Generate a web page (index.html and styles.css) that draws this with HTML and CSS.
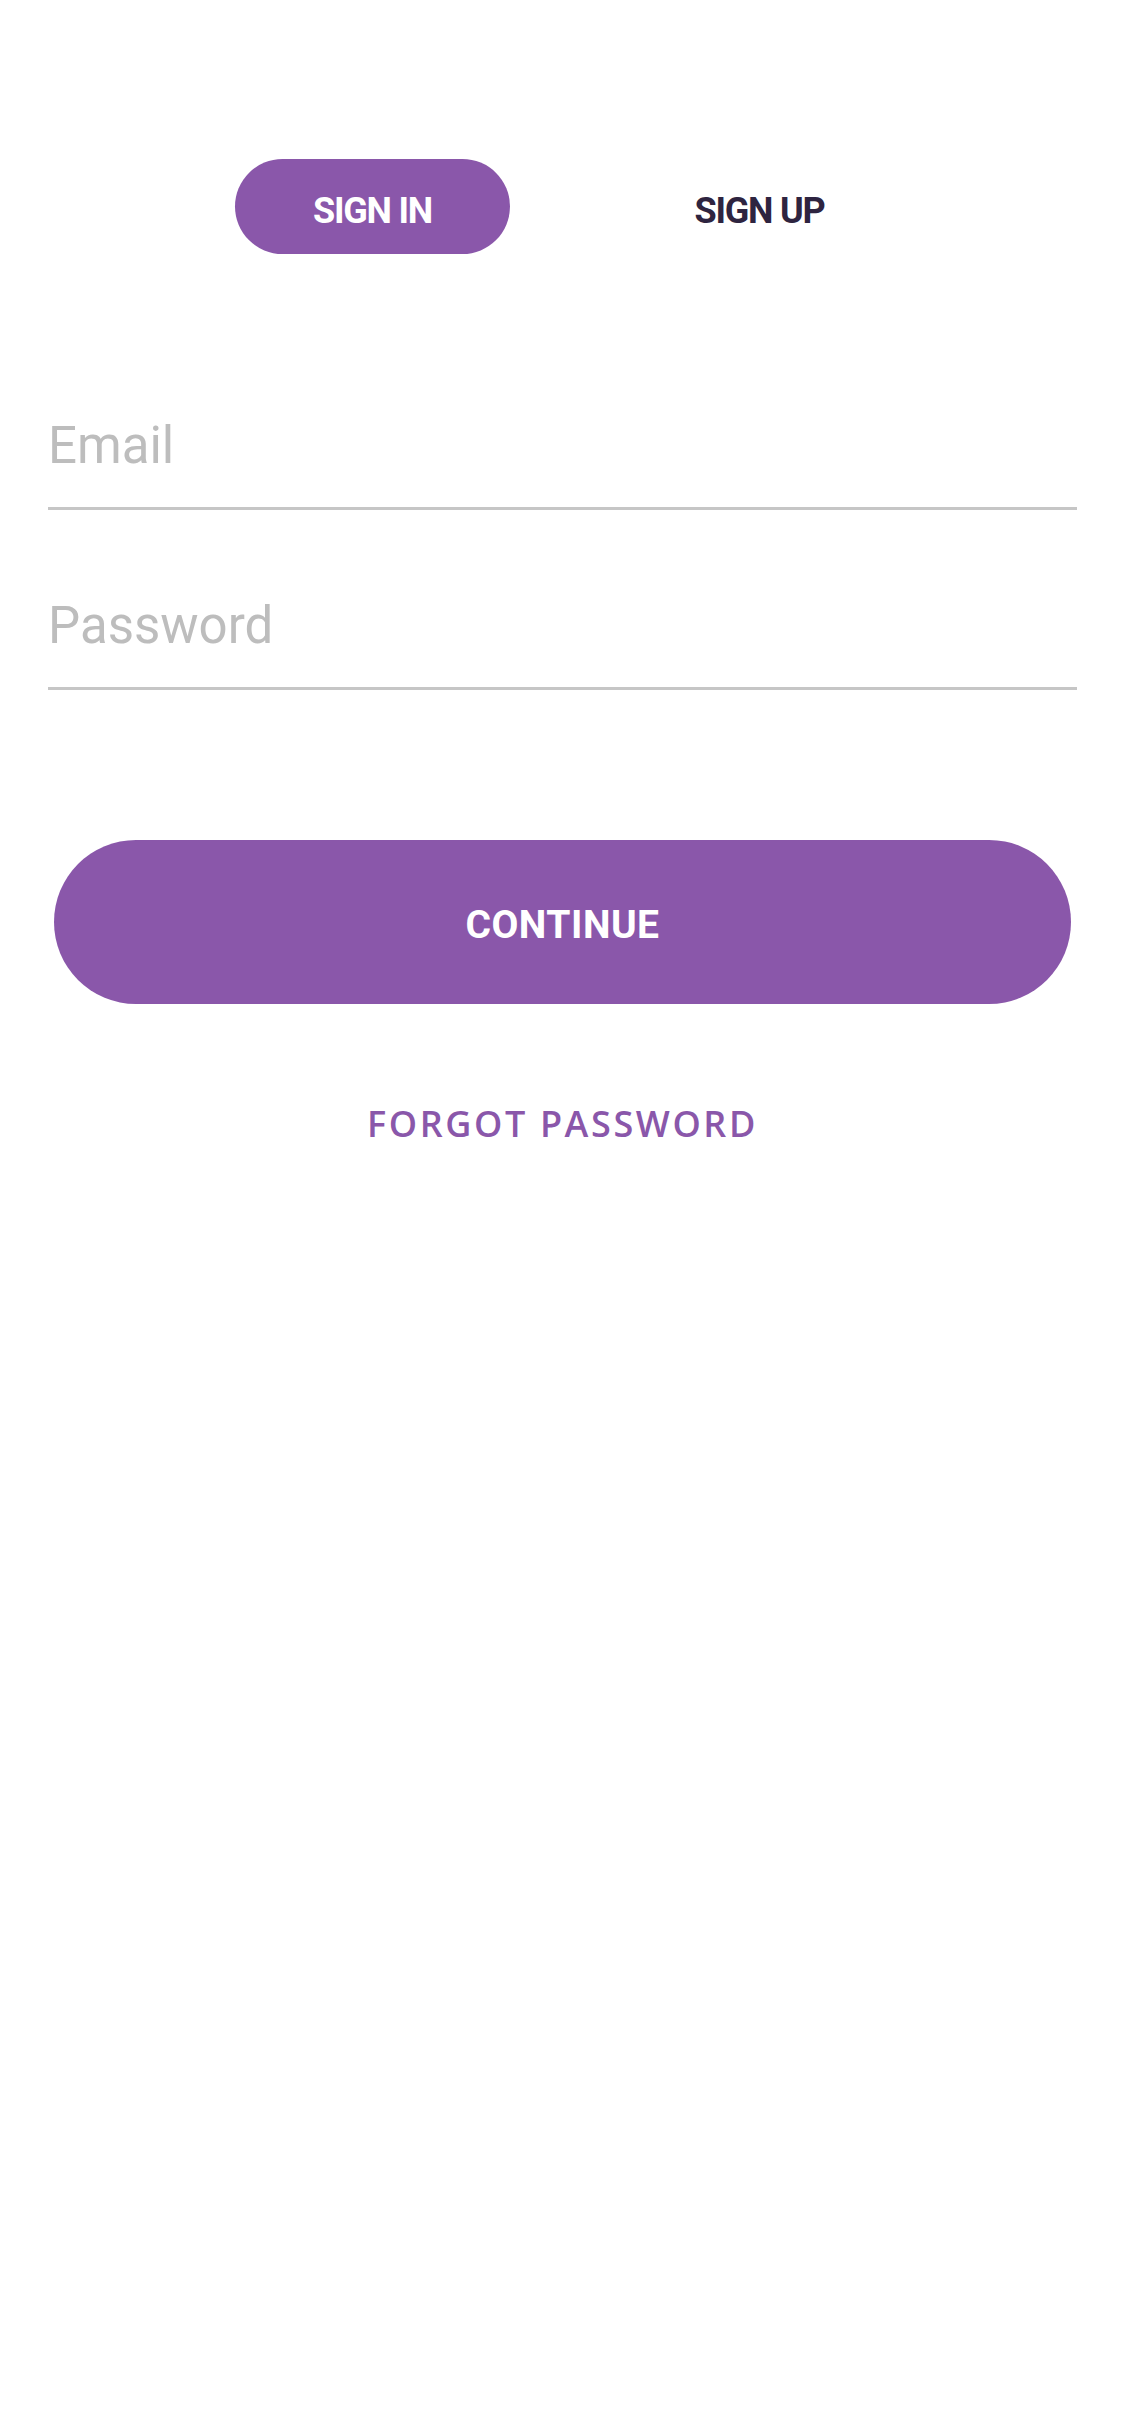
FILE: index.html
```html
<!DOCTYPE html>
<html lang="en">
<head>
    <meta charset="UTF-8">
    <meta name="viewport" content="width=device-width, initial-scale=1.0">
    <title>Sign In</title>
    <link rel="stylesheet" href="styles.css">
</head>
<body>
    <div class="screen">
        <div class="tabs">
            <button class="tab active" id="tab-signin">SIGN IN</button>
            <button class="tab" id="tab-signup">SIGN UP</button>
        </div>

        <form class="auth-form">
            <div class="fields">
                <input type="email" class="field" name="email" placeholder="Email">
                <input type="password" class="field field-password" name="password" placeholder="Password">
            </div>
            <button type="submit" class="continue-btn">CONTINUE</button>
        </form>

        <a href="#" class="forgot">FORGOT PASSWORD</a>
    </div>
</body>
</html>
```

FILE: styles.css
```css
body {
    margin: 0;
    padding: 0;
    background-color: #ffffff;
    font-family: Roboto, "Liberation Sans", sans-serif;
}
.screen {
    display: flex;
    flex-direction: column;
    padding-top: 159px;
}
.tabs {
    display: flex;
    justify-content: center;
    gap: 112px;
    padding-left: 7px;
}
.tab {
    width: 275px;
    height: 95px;
    border: none;
    border-radius: 48px;
    background: transparent;
    color: #2e2440;
    font-family: Roboto, "Liberation Sans", sans-serif;
    font-weight: 700;
    font-size: 36px;
    letter-spacing: -1.2px;
    padding: 8px 0 0;
    cursor: pointer;
}
.tab.active {
    background-color: #8a57aa;
    color: #ffffff;
}
.auth-form {
    display: flex;
    flex-direction: column;
}
.fields {
    display: flex;
    flex-direction: column;
    gap: 86px;
    padding: 162px 48px 0 48px;
}
.field {
    display: block;
    width: 100%;
    box-sizing: content-box;
    height: 60px;
    margin: 0;
    padding: 0 0 31px 0;
    border: none;
    border-bottom: 3px solid #c6c6c6;
    background: transparent;
    outline: none;
    font-family: Roboto, "Liberation Sans", sans-serif;
    font-size: 51px;
    line-height: 60px;
    color: #333;
}
.field::placeholder {
    color: #bdbdbd;
}
.continue-btn {
    margin: 150px 54px 0;
    height: 164px;
    padding: 6px 0 0;
    border: none;
    border-radius: 82px;
    background-color: #8a57aa;
    color: #ffffff;
    font-family: Roboto, "Liberation Sans", sans-serif;
    font-weight: 700;
    font-size: 39px;
    letter-spacing: 0.5px;
    cursor: pointer;
}
.forgot {
    align-self: center;
    margin-top: 99px;
    color: #8a57aa;
    text-decoration: none;
    font-family: "Open Sans", "Liberation Sans", sans-serif;
    font-weight: 600;
    font-size: 36px;
    line-height: 42px;
    letter-spacing: 2.6px;
}
```
